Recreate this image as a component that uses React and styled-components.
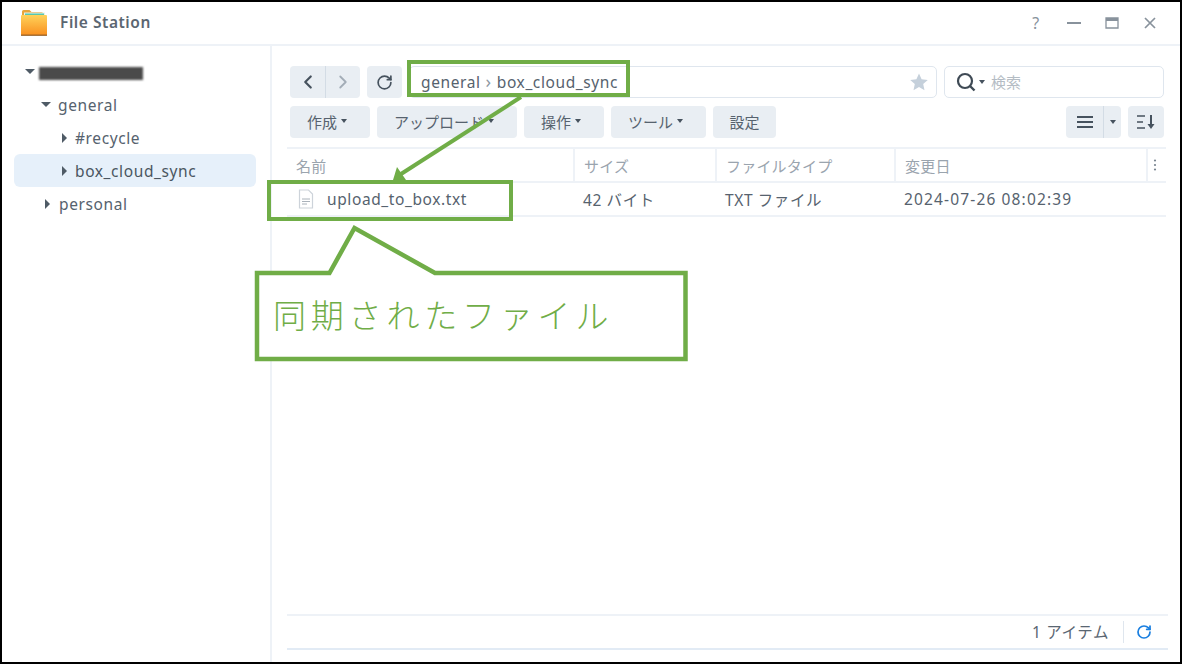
import React from "react"
import styled, { createGlobalStyle } from 'styled-components'
import { ChevronLeft, ChevronRight, RotateCw } from 'lucide-react'

const Global = createGlobalStyle`
  html, body { margin: 0; padding: 0; background: #fff; }
  * { box-sizing: border-box; }
`

const FONT = `"Noto Sans", "Noto Sans CJK JP", sans-serif`
const GREEN = '#70ad47'

const Frame = styled.div`
  position: relative;
  width: 1182px;
  height: 664px;
  border: 2px solid #000;
  background: #fff;
  display: flex;
  flex-direction: column;
  font-family: ${FONT};
  font-size: 15.5px;
  letter-spacing: 0.6px;
  color: #505c68;
  overflow: hidden;
`

const TitleBar = styled.header`
  flex: 0 0 44px;
  display: flex;
  align-items: center;
  padding: 0 21px 0 17px;
  border-bottom: 2px solid #eef2f7;
`

const AppName = styled.div`
  margin-left: 11px;
  margin-top: -2px;
  font-size: 15.5px;
  letter-spacing: 0.55px;
  font-weight: 600;
  color: #5b6671;
  flex: 1;
`

const WinButtons = styled.div`
  display: flex;
  align-items: center;
  gap: 20px;
  color: #88929c;
`

const WinButton = styled.span`
  width: 18px;
  height: 18px;
  display: flex;
  align-items: center;
  justify-content: center;
  font-size: 16px;
`

const Body = styled.div`
  flex: 1;
  display: flex;
  min-height: 0;
`

const Sidebar = styled.nav`
  flex: 0 0 269px;
  border-right: 2px solid #eef2f7;
  padding: 9px 14px 0 12px;
`

const TreeRow = styled.div`
  height: 33px;
  display: flex;
  align-items: center;
  padding-left: ${p => p.$indent}px;
  border-radius: 6px;
  width: 242px;
  background: ${p => p.$selected ? '#e6f0fa' : 'transparent'};
  color: ${p => p.$selected ? '#4a5661' : '#56626e'};
`

const Caret = styled.span`
  width: 0;
  height: 0;
  margin-right: ${p => p.$gap}px;
  ${p => p.$open
    ? 'border-left: 5px solid transparent; border-right: 5px solid transparent; border-top: 5px solid #4f5b66;'
    : 'border-top: 5px solid transparent; border-bottom: 5px solid transparent; border-left: 5px solid #4f5b66;'}
`

const Redacted = styled.span`
  display: block;
  width: 104px;
  height: 13px;
  margin-top: 4px;
  background: #4a4a4a;
  filter: blur(0.8px);
`

const Main = styled.main`
  flex: 1;
  min-width: 0;
  display: flex;
  flex-direction: column;
  padding: 20px 14px 12px 18px;
`

const ToolRow = styled.div`
  display: flex;
  gap: 7px;
  height: 32px;
  margin-bottom: 8px;
  margin-right: 2px;
`

const Spacer = styled.div`
  flex: 1;
`

const ButtonGroup = styled.div`
  display: flex;
  height: 32px;
  background: #e9eef3;
  border-radius: 4px;
`

const GroupCell = styled.div`
  width: ${p => p.$w}px;
  display: flex;
  align-items: center;
  justify-content: center;
  color: ${p => p.$muted ? '#a3adb7' : '#46525e'};
  border-left: ${p => p.$divider ? '1px solid #d3dce5' : 'none'};
`

const ToolButton = styled.button`
  width: ${p => p.$w}px;
  height: 32px;
  padding: 0 ${p => p.$plain ? 0 : 6}px 2px 0;
  border: none;
  border-radius: 4px;
  background: #e9eef3;
  font-family: ${FONT};
  font-size: 15px;
  color: #56626e;
  display: flex;
  align-items: center;
  justify-content: center;
  gap: 4px;
`

const SmallCaret = styled.span`
  width: 0;
  height: 0;
  border-left: 3.5px solid transparent;
  border-right: 3.5px solid transparent;
  border-top: 4px solid #46525e;
`

const PathBox = styled.div`
  flex: 1;
  height: 32px;
  border: 1px solid #dfe6ee;
  border-radius: 5px;
  display: flex;
  align-items: center;
  padding: 0 7px 0 11px;
  gap: 5px;
`

const PathText = styled.span`
  color: #56626e;
`

const PathSep = styled.span`
  color: #8d98a3;
  font-size: 18px;
  line-height: 1;
  margin-top: -3px;
`

const SearchBox = styled.div`
  flex: 0 0 220px;
  height: 32px;
  border: 1px solid #dfe6ee;
  border-radius: 5px;
  display: flex;
  align-items: center;
  padding-left: 10px;
  gap: 2px;
`

const SearchHint = styled.span`
  margin-left: 4px;
  margin-top: -2px;
  font-size: 15px;
  letter-spacing: 0;
  color: #b4bcc4;
`

const Table = styled.div`
  margin-top: 1px;
  margin-left: -3px;
  flex: 1;
`

const HeaderRow = styled.div`
  display: grid;
  grid-template-columns: 286px 142px 179px 252px 19px;
  height: 36px;
  border-top: 2px solid #eef2f7;
  border-bottom: 2px solid #eef2f7;
`

const HeaderCell = styled.div`
  display: flex;
  align-items: center;
  padding-left: ${p => p.$pad ?? 9}px;
  font-size: 15px;
  letter-spacing: 0.2px;
  color: #9aa4ae;
  border-left: ${p => p.$first ? 'none' : '2px solid #eef2f7'};
`

const DataRow = styled.div`
  display: grid;
  grid-template-columns: 286px 142px 179px 252px 19px;
  height: 34px;
  border-bottom: 2px solid #eef2f7;
  align-items: center;
`

const DataCell = styled.div`
  display: flex;
  align-items: center;
  padding-left: ${p => p.$pad ?? 10}px;
  color: #56626e;
  letter-spacing: ${p => p.$wide ? '1.15px' : 'inherit'};
`

const FileName = styled.span`
  margin-left: 12px;
`

const Footer = styled.footer`
  height: 36px;
  margin-left: -3px;
  margin-right: -2px;
  border-top: 2px solid #eef2f7;
  border-bottom: 2px solid #e2ebf5;
  display: flex;
  align-items: center;
  justify-content: flex-end;
  padding-right: 16px;
`

const ItemCount = styled.span`
  color: #5a6672;
  padding-right: 14px;
  border-right: 1px solid #dfe6ee;
  margin-right: 12px;
  line-height: 22px;
`

/* the green marks drawn over the screenshot */
const Marks = styled.svg`
  position: absolute;
  left: -2px;
  top: -2px;
  width: 1182px;
  height: 664px;
  pointer-events: none;
`

const CalloutText = styled.div`
  position: absolute;
  left: 271px;
  top: 289px;
  font-family: "Noto Sans CJK JP", sans-serif;
  font-weight: 300;
  font-size: 33px;
  letter-spacing: 4.8px;
  line-height: 46px;
  color: ${GREEN};
  white-space: nowrap;
`

const FolderIcon = () => (
  <svg width="30" height="30" viewBox="0 0 30 30">
    <defs>
      <linearGradient id="fold" x1="0" y1="0" x2="0" y2="1">
        <stop offset="0" stopColor="#ffd25a" />
        <stop offset="1" stopColor="#f98f1e" />
      </linearGradient>
    </defs>
    <path d="M3 3.5a1.5 1.5 0 0 1 1.5-1.5h6l2 2h10a1.5 1.5 0 0 1 1.5 1.5V12H3z" fill="#e8a53a" />
    <rect x="5" y="4.5" width="21" height="8" fill="#e9f2ea" />
    <rect x="6" y="5.5" width="19" height="2" fill="#57c7ae" />
    <path d="M2 10.5q0-1 1-1h24q1 0 1 1V33q0 1-1 1H3q-1 0-1-1z" transform="translate(0 -1) scale(1 .84)" fill="url(#fold)" />
    <rect x="2" y="26.5" width="26" height="1.5" fill="#8a5a26" opacity=".75" />
  </svg>
)

const Minimize = () => (
  <svg width="16" height="16" viewBox="0 0 16 16"><rect x="1" y="7" width="14" height="2" fill="currentColor" /></svg>
)

const Maximize = () => (
  <svg width="16" height="16" viewBox="0 0 16 16"><path d="M2 3h12v10H2z" fill="none" stroke="currentColor" strokeWidth="1.3" /><rect x="2" y="3" width="12" height="3" fill="currentColor" /></svg>
)

const Close = () => (
  <svg width="16" height="16" viewBox="0 0 16 16"><path d="M3 3l10 10M13 3L3 13" stroke="currentColor" strokeWidth="1.7" /></svg>
)

const Star = () => (
  <svg width="20" height="20" viewBox="0 0 20 20" style={{ marginLeft: 'auto' }}>
    <path d="M10 1.5l2.6 5.7 6.2.7-4.6 4.2 1.3 6.1L10 15.1l-5.5 3.1 1.3-6.1L1.2 7.9l6.2-.7z" fill="#c5d0db" />
  </svg>
)

const SearchGlass = () => (
  <svg width="22" height="22" viewBox="0 0 22 22">
    <circle cx="10" cy="10" r="7" fill="none" stroke="#3f4a55" strokeWidth="2.2" />
    <path d="M14.500 14.500l5 5" stroke="#3f4a55" strokeWidth="2.400" />
  </svg>
)

const ListIcon = () => (
  <svg width="18" height="14" viewBox="0 0 18 14">
    <path d="M1 2h16M1 7h16M1 12h16" stroke="#46525e" strokeWidth="1.8" />
  </svg>
)

const SortIcon = () => (
  <svg width="20" height="16" viewBox="0 0 20 16">
    <path d="M1 2h8M1 8h6M1 14h8" stroke="#46525e" strokeWidth="1.7" />
    <path d="M15 1v11" stroke="#46525e" strokeWidth="2" />
    <path d="M11.5 10H18.500L15 15z" fill="#46525e" />
  </svg>
)

const DotsIcon = () => (
  <svg width="4" height="14" viewBox="0 0 4 14">
    <circle cx="2" cy="2.500" r="1.100" fill="#78848f" />
    <circle cx="2" cy="7" r="1.100" fill="#78848f" />
    <circle cx="2" cy="11.500" r="1.100" fill="#78848f" />
  </svg>
)

const TextFileIcon = () => (
  <svg width="18" height="20" viewBox="0 0 18 20">
    <path d="M2.500 1h9l4 4v14h-13z" fill="#fff" stroke="#cdd3da" strokeWidth="1.200" />
    <path d="M5 10h8M5 12.500h8M5 15h5" stroke="#aab2ba" strokeWidth="1" />
  </svg>
)

const tree = [
  { id: 'root', indent: 11, open: true, gap: 4, redacted: true },
  { id: 'general', label: 'general', indent: 27, open: true, gap: 7 },
  { id: 'recycle', label: '#recycle', indent: 48, gap: 8 },
  { id: 'box', label: 'box_cloud_sync', indent: 48, gap: 8, selected: true },
  { id: 'personal', label: 'personal', indent: 31, gap: 9 },
]

const tools = [
  { label: '作成', w: 80 },
  { label: 'アップロード', w: 140 },
  { label: '操作', w: 80 },
  { label: 'ツール', w: 95 },
  { label: '設定', w: 63, plain: true },
]

export default () => {
  return <Frame>
    <Global />
    <TitleBar>
      <FolderIcon />
      <AppName>File Station</AppName>
      <WinButtons>
        <WinButton>?</WinButton>
        <WinButton><Minimize /></WinButton>
        <WinButton><Maximize /></WinButton>
        <WinButton><Close /></WinButton>
      </WinButtons>
    </TitleBar>
    <Body>
      <Sidebar>
        {tree.map(t => (
          <TreeRow key={t.id} $indent={t.indent} $selected={t.selected}>
            <Caret $open={t.open} $gap={t.gap} />
            {t.redacted ? <Redacted /> : t.label}
          </TreeRow>
        ))}
      </Sidebar>
      <Main>
        <ToolRow>
          <ButtonGroup>
            <GroupCell $w={35}><ChevronLeft size={22} strokeWidth={2.4} /></GroupCell>
            <GroupCell $w={35} $muted $divider><ChevronRight size={22} strokeWidth={2} /></GroupCell>
          </ButtonGroup>
          <ButtonGroup>
            <GroupCell $w={35}><RotateCw size={17} strokeWidth={2.4} /></GroupCell>
          </ButtonGroup>
          <PathBox>
            <PathText>general</PathText>
            <PathSep>›</PathSep>
            <PathText>box_cloud_sync</PathText>
            <Star />
          </PathBox>
          <SearchBox>
            <SearchGlass />
            <SmallCaret />
            <SearchHint>検索</SearchHint>
          </SearchBox>
        </ToolRow>
        <ToolRow>
          {tools.map(t => (
            <ToolButton key={t.label} $w={t.w} $plain={t.plain}>
              {t.label}
              {!t.plain && <SmallCaret />}
            </ToolButton>
          ))}
          <Spacer />
          <ButtonGroup>
            <GroupCell $w={37}><ListIcon /></GroupCell>
            <GroupCell $w={18} $divider><SmallCaret /></GroupCell>
          </ButtonGroup>
          <ButtonGroup>
            <GroupCell $w={36}><SortIcon /></GroupCell>
          </ButtonGroup>
        </ToolRow>
        <Table>
          <HeaderRow>
            <HeaderCell $first>名前</HeaderCell>
            <HeaderCell>サイズ</HeaderCell>
            <HeaderCell>ファイルタイプ</HeaderCell>
            <HeaderCell>変更日</HeaderCell>
            <HeaderCell $pad={5}><DotsIcon /></HeaderCell>
          </HeaderRow>
          <DataRow>
            <DataCell>
              <TextFileIcon />
              <FileName>upload_to_box.txt</FileName>
            </DataCell>
            <DataCell>42 バイト</DataCell>
            <DataCell>TXT ファイル</DataCell>
            <DataCell $wide>2024-07-26 08:02:39</DataCell>
          </DataRow>
        </Table>
        <Footer>
          <ItemCount>1 アイテム</ItemCount>
          <RotateCw size={16} strokeWidth={2.6} color="#1a7fe0" />
        </Footer>
      </Main>
    </Body>
    <Marks viewBox="0 0 1182 664">
      <rect x="409" y="62" width="219" height="33" fill="none" stroke={GREEN} strokeWidth="4" />
      <rect x="269" y="182" width="242" height="37" fill="none" stroke={GREEN} strokeWidth="4" />
      <path d="M521 97L401 174" stroke={GREEN} strokeWidth="4" fill="none" />
      <path d="M393 180l4-13 9 13z" fill={GREEN} />
      <path d="M329.500 273L354.500 228L435 273H685.500V359H257V273z" fill="#fff" stroke={GREEN} strokeWidth="4.500" />
    </Marks>
    <CalloutText>同期されたファイル</CalloutText>
  </Frame>
}
